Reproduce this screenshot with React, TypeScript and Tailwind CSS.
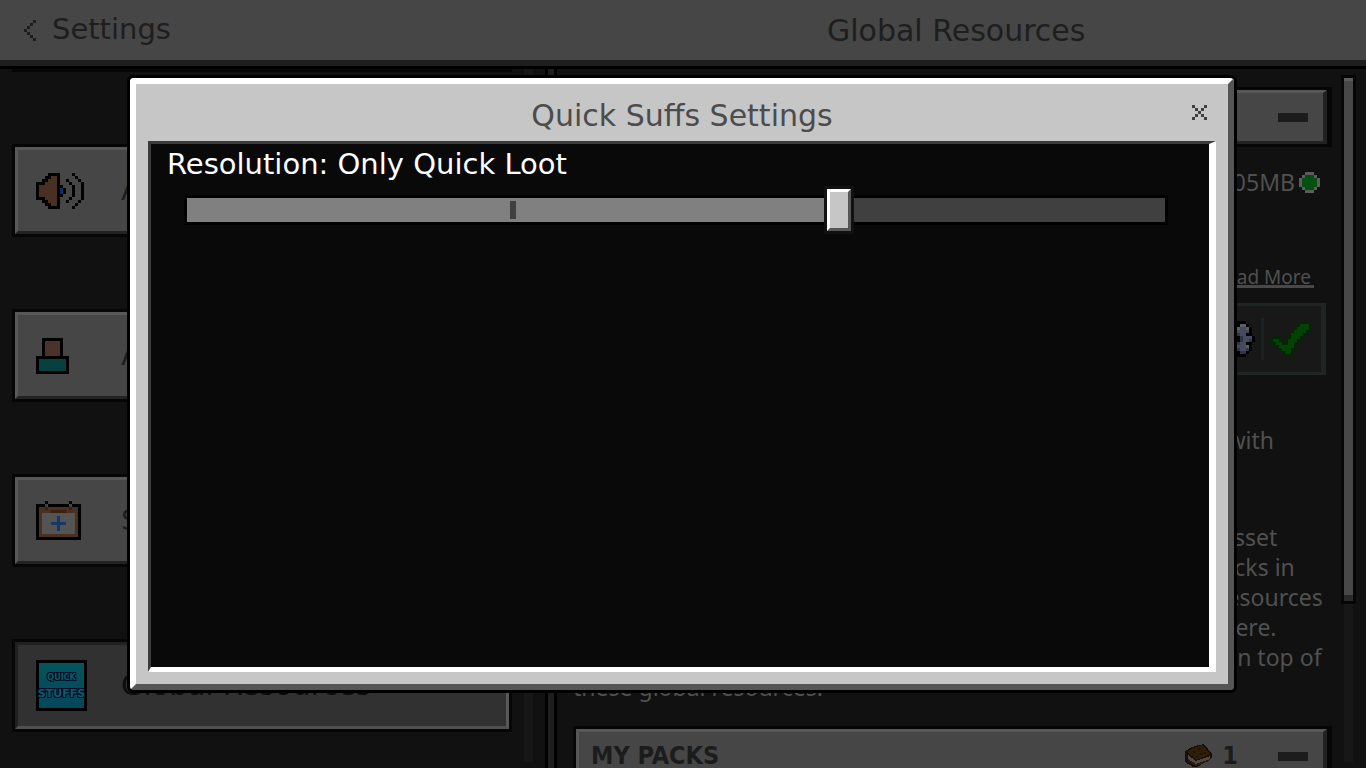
import { useState } from "react";

const PALETTE: Record<string, string> = {
  K: "#000000",
  B: "#4a3020",
  C: "#3a2114",
  U: "#0b2f6b",
  R: "#4a332a",
  T: "#07413f",
  W: "#545454",
  P: "#113a68",
  G: "#444444",
  D: "#022602",
  V: "#034203",
  L: "#444b5c",
  M: "#5a5e66",
  N: "#2f3447",
  S: "#5c5c5c",
  E: "#055011",
  X: "#3f3f3f",
  H: "#1e1e1e",
};

const SPEAKER = [
  "....KKKK....K...",
  "...KKBBK.....K..",
  "..KKBBBK..K...K.",
  "KKKBBBBK...K...K",
  "KBBBBBBKK...K..K",
  "KBBBBBBKUK..K..K",
  "KBBBBBBKUK..K..K",
  "KBBBBBBKK...K..K",
  "KKKBBBBK...K...K",
  "..KKBBBK..K...K.",
  "...KKBBK.....K..",
  "....KKKK....K...",
];

const ACCOUNT = [
  "..KKKKKKK..",
  "..KRRRRRK..",
  "..KRRRRRK..",
  "..KRRRRRK..",
  "..KRRRRRK..",
  "..KRRRRRK..",
  "KKKKKKKKKKK",
  "KTTTTTTTTTK",
  "KTTTTTTTTTK",
  "KTTTTTTTTTK",
  "KTTTTTTTTTK",
  "KKKKKKKKKKK",
];

const CALENDAR = [
  "...K.......K...",
  "KKKGKKKKKKKGKKK",
  "KBBCBBBBBBBCBBK",
  "KBBBBCCCCCBBBBK",
  "KBWWWWWWWWWWWBK",
  "KBWWWWWPWWWWWBK",
  "KBWWWWWPWWWWWBK",
  "KBWWWPPPPPWWWBK",
  "KBWWWWWPWWWWWBK",
  "KBWWWWWPWWWWWBK",
  "KBWWWWWWWWWWWBK",
  "KBBBBBBBBBBBBBK",
  "KKKKKKKKKKKKKKK",
];

const CHECK = [
  "..........DDD.",
  ".........DVVVD",
  "........DVVVVD",
  ".......DVVVVD.",
  ".......VVVVD..",
  ".DD...DVVVD...",
  "DVVD..VVVD....",
  "DDVVDDVVD.....",
  "..DVVVVVD.....",
  "...DVVVD......",
  "....DVVD......",
  ".....DD.......",
];

const GEAR = [
  "...KKKKKK...",
  "..KMMKKMMK..",
  ".KMLLMMLLMK.",
  ".KLLLLLLLLK.",
  ".KKLLNNLLKK.",
  "KMLLNKKNLLLK",
  "KMLLNKKNLLNK",
  ".KKLLNNLLKK.",
  ".KLLLLLLLMK.",
  ".KNLLNNLLNK.",
  "..KNNKKNNK..",
  "...KKKKKK...",
];

const STATUS = [
  "..SSS..",
  ".SEEES.",
  "SEEEEES",
  "SEEEEES",
  "SEEEEES",
  ".SEEES.",
  "..SSS..",
];

const CLOSE = ["X...X", ".X.X.", "..X..", ".X.X.", "X...X"];

const BACK = ["...H", "..H.", ".H..", "H...", ".H..", "..H.", "...H"];

function PixelArt({ rows }: { rows: string[] }) {
  return (
    <svg
      width={rows[0].length * 3}
      height={rows.length * 3}
      viewBox={`0 0 ${rows[0].length} ${rows.length}`}
      shapeRendering="crispEdges"
      className="shrink-0"
      aria-hidden="true"
    >
      {rows.map((row, y) =>
        row.split("").map((cell, x) =>
          cell === "." ? null : <rect key={`${x}-${y}`} x={x} y={y} width="1" height="1" fill={PALETTE[cell]} />
        )
      )}
    </svg>
  );
}

function PackIcon() {
  return (
    <span className="flex size-[51px] shrink-0 flex-col items-center justify-center border-3 border-black bg-linear-to-b from-[#04545d] to-[#05475b] font-['DejaVu_Sans'] font-bold text-[#0b5c66] [text-shadow:1px_1px_0_#060a28,-1px_-1px_0_#060a28,1px_-1px_0_#060a28,-1px_1px_0_#060a28]">
      <span className="text-[8px] leading-4">QUICK</span>
      <span className="text-[11px] leading-4">STUFFS</span>
    </span>
  );
}

function CookieIcon() {
  return (
    <svg width="27" height="24" viewBox="0 0 27 24" shapeRendering="crispEdges" aria-hidden="true">
      <path d="M0 7L7 3L14 1L19 0L27 10L27 14L21 18L12 23L8 23L0 18Z" fill="#170f08" />
      <path d="M2 8L8 4L18 1L25 10L12 16Z" fill="#2e1e08" />
      <path d="M3 11L11 17L25 12L25 15L11 20L3 15Z" fill="#4c4846" />
      <path d="M3 15L11 20L25 15L24 17L11 22L3 18Z" fill="#2a1a0b" />
      <path d="M8 7h2v2h-2zM13 4h2v2h-2zM15 9h2v2h-2zM19 8h2v2h-2zM11 12h2v1h-2z" fill="#1c1206" />
    </svg>
  );
}

const MENU = [
  { label: "Audio", icon: <PixelArt rows={SPEAKER} /> },
  { label: "Account", icon: <PixelArt rows={ACCOUNT} /> },
  { label: "Subscriptions", icon: <PixelArt rows={CALENDAR} /> },
  { label: "Global Resources", icon: <PackIcon />, active: true },
];

const NOTES = [
  "Resource Packs are applied bottom to top. This means each asset",
  "that is in both packs will be overridden by the higher pack. Packs in",
  "your worlds will be applied on top of all these. These global resources",
  "are only for you. No one else will view the resources you set here.",
  "Resource packs in your worlds or worlds you join will be put on top of",
  "these global resources.",
];

function SectionBar({ label, count }: { label: string; count?: number }) {
  return (
    <button
      type="button"
      aria-label={label}
      className="block w-full border-3 border-r-5 border-[#060606] text-left"
    >
      <span className="flex h-[54px] items-center border-3 border-r-4 border-t-[#585858] border-r-[#222] border-b-[#222] border-l-[#585858] bg-[#464646] pr-[15px] pl-3 font-['DejaVu_Sans_Condensed',sans-serif] text-[25px] font-bold text-[#1c1c1c]">
        <span className="grow">{label}</span>
        {count ? (
          <>
            <CookieIcon />
            <span className="mr-10 ml-2.5">{count}</span>
          </>
        ) : null}
        <span className="h-[9px] w-[30px] bg-[#1c1c1c]" />
      </span>
    </button>
  );
}

function ResolutionSlider() {
  const [value, setValue] = useState(2);
  const percent = (value / 3) * 100;
  const names = ["Off", "Only Quick Craft", "Only Quick Loot", "All"];

  return (
    <div>
      <label htmlFor="resolution" className="block pl-4 text-[29px] leading-10 text-white">
        Resolution: {names[value]}
      </label>
      <div className="relative mt-0.5 mr-[41px] ml-[33px] flex h-12 items-center">
        <div className="h-[30px] w-full border-3 border-black bg-[#404040]">
          <div className="h-full bg-[#808080]" style={{ width: `${percent}%` }} />
        </div>
        <div className="absolute inset-x-[3px] inset-y-0">
          <span className="absolute top-[15px] left-1/3 h-[18px] w-1.5 -translate-x-1/2 bg-[#404040]" />
          <span
            className="absolute top-0 h-12 w-[30px] -translate-x-1/2 border-3 border-[#111]"
            style={{ left: `${percent}%` }}
          >
            <span className="block h-full border-3 border-t-white border-r-[#565656] border-b-[#565656] border-l-white bg-[#c6c6c6]" />
          </span>
        </div>
        <input
          id="resolution"
          type="range"
          min={0}
          max={3}
          value={value}
          onChange={(event) => setValue(Number(event.target.value))}
          className="absolute inset-0 h-full w-full cursor-pointer opacity-0"
        />
      </div>
    </div>
  );
}

function SettingsDialog() {
  return (
    <div className="absolute inset-0 flex py-[75px] pr-[129px] pl-[127px]">
      <section
        role="dialog"
        aria-label="Quick Suffs Settings"
        className="flex grow rounded-md border-3 border-black bg-black"
      >
        <div className="flex grow flex-col rounded-sm border-6 border-t-white border-r-[#565656] border-b-[#565656] border-l-white bg-[#c6c6c6] px-3 pb-3">
          <header className="relative h-[57px] shrink-0">
            <h2 className="pt-2 text-center text-[30px] leading-[48px] text-[#4c4c4c]">Quick Suffs Settings</h2>
            <button type="button" aria-label="Close" className="absolute inset-y-0 right-0 grid w-[33px] place-items-center">
              <PixelArt rows={CLOSE} />
            </button>
          </header>
          <div className="grow border-t-3 border-r-7 border-b-5 border-l-3 border-t-[#3b3b3b] border-r-white border-b-white border-l-[#3b3b3b] bg-[#090909]">
            <ResolutionSlider />
          </div>
        </div>
      </section>
    </div>
  );
}

export default function App() {
  return (
    <main className="relative flex h-screen flex-col overflow-hidden bg-[#111] font-['DejaVu_Sans',sans-serif]">
      <header className="flex h-[69px] shrink-0 border-b-3 border-black text-[#1e1e1e]">
        <div className="flex w-full border-b-6 border-[#1e1e1e] bg-[#464646]">
          <button type="button" className="flex w-2/5 items-center gap-4 pl-6 text-[29px]">
            <PixelArt rows={BACK} />
            Settings
          </button>
          <h1 className="flex grow items-center justify-center text-[30px]">Global Resources</h1>
        </div>
      </header>

      <div className="flex min-h-0 grow">
        <nav className="flex w-[39.9%] shrink-0 justify-between pl-3">
          <div className="flex grow flex-col gap-[72px]">
            <div className="h-[3px] shrink-0 bg-[#060606]" />
            {MENU.map((item) => (
              <button
                key={item.label}
                type="button"
                className="block shrink-0 border-3 border-[#060606] text-left text-[29px]"
              >
                <span
                  className={`flex h-[87px] items-center border-3 pl-[18px] ${
                    item.active
                      ? "border-t-[#202020] border-r-[#585858] border-b-[#505050] border-l-[#202020] bg-[#313131] text-[#0c0c0c]"
                      : "border-t-[#585858] border-r-[#222] border-b-[#222] border-l-[#585858] bg-[#464646] text-[#1e1e1e]"
                  }`}
                >
                  <span className="w-[85px]">{item.icon}</span>
                  <span>{item.label}</span>
                </span>
              </button>
            ))}
          </div>
          <div className="mr-3 mb-1.5 ml-3 w-[9px] bg-[#171717]" />
        </nav>
        <div className="w-3 shrink-0 border-x-3 border-black bg-[#1e1e1e]" />

        <section className="min-w-0 grow pt-[18px] pr-[9px] pl-4 font-['Noto_Sans',sans-serif] text-[23px] leading-[30px] text-[#505050]">
          <SectionBar label="ACTIVE" />
          <div className="mt-5 flex h-[30px] items-center justify-end gap-1 pr-3">
            <span>Storage: 1.05MB</span>
            <PixelArt rows={STATUS} />
          </div>
          <div className="mt-[73px] flex justify-end pr-[18px]">
            <a href="#more" className="border-b-3 border-[#484848] pr-[3px] text-[19px] leading-[15px]">
              Read More
            </a>
          </div>
          <div className="mt-[15px] mr-1.5 flex h-[72px] items-center justify-end border-3 border-r-5 border-[#1f2525] bg-[#181818]">
            <button type="button" aria-label="Pack settings" className="mr-1.5">
              <PixelArt rows={GEAR} />
            </button>
            <span className="h-[42px] w-[3px] bg-[#1b2222]" />
            <button type="button" aria-label="Selected" className="mr-[9px] ml-1.5">
              <PixelArt rows={CHECK} />
            </button>
          </div>
          <p className="mt-[50px] pr-[58px] text-right">Quick actions for your inventory with</p>
          <p className="mt-[67px] mb-6 whitespace-nowrap">
            {NOTES.map((line) => (
              <span key={line} className="block">
                {line}
              </span>
            ))}
          </p>
          <SectionBar label="MY PACKS" count={1} />
        </section>

        <div className="mt-1.5 mr-[10px] mb-1.5 w-[15px] shrink-0 bg-[linear-gradient(90deg,#111_3px,#171717_3px,#171717_12px,#111_12px)]">
          <div className="h-[77%] border-3 border-[#060606]">
            <div className="h-full border-t-3 border-b-6 border-t-[#5c5c5c] border-b-[#2a2a2a] bg-[#484848]" />
          </div>
        </div>
      </div>

      <SettingsDialog />
    </main>
  );
}
